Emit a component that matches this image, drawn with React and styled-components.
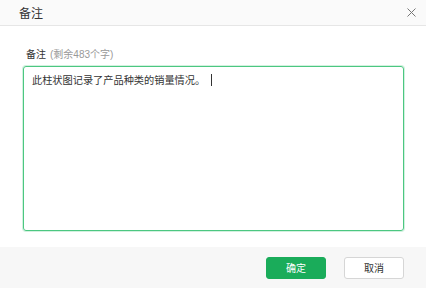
import React from 'react';
import styled, { createGlobalStyle } from 'styled-components';

const GlobalStyle = createGlobalStyle`
  html, body {
    margin: 0;
    padding: 0;
    background: #ffffff;
  }
  body {
    font-family: "Liberation Sans", "Noto Sans CJK SC", sans-serif;
  }
`;

const Dialog = styled.div`
  width: 426px;
  height: 288px;
  display: flex;
  flex-direction: column;
  background: #ffffff;
  overflow: hidden;
`;

const Header = styled.div`
  height: 25px;
  flex-shrink: 0;
  display: flex;
  align-items: center;
  justify-content: space-between;
  padding: 0 8px 0 19px;
  background: #fafafa;
  border-bottom: 1px solid #e6e6e6;
`;

const Title = styled.span`
  font-size: 12px;
  color: #333333;
`;

const CloseButton = styled.button`
  width: 14px;
  height: 14px;
  padding: 0;
  border: none;
  background: transparent;
  display: flex;
  align-items: center;
  justify-content: center;
  cursor: pointer;
`;

const Body = styled.div`
  flex: 1;
  display: flex;
  flex-direction: column;
  padding: 22px 22px 16px 23px;
`;

const Label = styled.div`
  height: 14px;
  line-height: 14px;
  font-size: 10px;
  color: #333333;
  margin-bottom: 4px;
  margin-left: 3px;
`;

const Hint = styled.span`
  color: #999999;
  margin-left: 4px;
`;

const TextBox = styled.div`
  flex: 1;
  box-sizing: border-box;
  border: 1px solid #4cc781;
  border-radius: 3px;
  box-shadow: 0 0 0 1px rgba(76, 199, 129, 0.25);
  padding: 7px 8px;
  font-size: 10.2px;
  line-height: 14px;
  color: #333333;
`;

const Caret = styled.span`
  display: inline-block;
  width: 1px;
  height: 12px;
  margin-left: 6px;
  background: #333333;
  vertical-align: -2px;
`;

const Footer = styled.div`
  height: 41px;
  flex-shrink: 0;
  display: flex;
  align-items: center;
  justify-content: flex-end;
  gap: 18px;
  padding: 0 22px;
  background: #f7f7f7;
`;

const Button = styled.button`
  width: 60px;
  height: 22px;
  box-sizing: border-box;
  border-radius: 3px;
  font-family: "Liberation Sans", "Noto Sans CJK SC", sans-serif;
  font-size: 10px;
  padding: 0;
  cursor: pointer;
  border: 1px solid ${(props) => (props.primary ? '#1aac5a' : '#d6d6d6')};
  background: ${(props) => (props.primary ? '#1aac5a' : '#ffffff')};
  color: ${(props) => (props.primary ? '#ffffff' : '#333333')};
`;

const App = () => {
  return (
    <>
      <GlobalStyle />
      <Dialog>
        <Header>
          <Title>备注</Title>
          <CloseButton aria-label="close">
            <svg width="9" height="9" viewBox="0 0 9 9">
              <path d="M0.5 0.5L8.5 8.5M8.5 0.5L0.5 8.5" stroke="#777" strokeWidth="1" />
            </svg>
          </CloseButton>
        </Header>
        <Body>
          <Label>
            备注<Hint>(剩余483个字)</Hint>
          </Label>
          <TextBox>
            此柱状图记录了产品种类的销量情况。<Caret />
          </TextBox>
        </Body>
        <Footer>
          <Button primary>确定</Button>
          <Button>取消</Button>
        </Footer>
      </Dialog>
    </>
  );
};

export default App;
